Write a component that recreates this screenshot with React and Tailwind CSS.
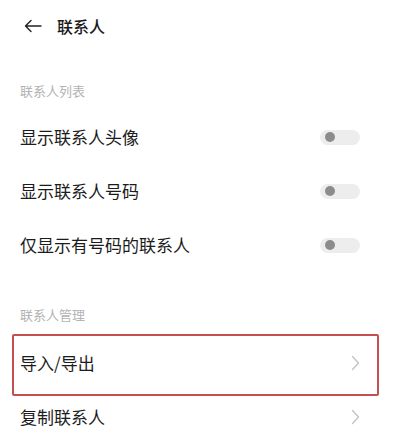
import React from "react";

function Toggle() {
  return (
    <div className="w-[40px] h-[15px] rounded-full bg-[#ededed] flex items-center pl-[5px]">
      <div className="w-[10px] h-[10px] rounded-full bg-[#8c8c8c]" />
    </div>
  );
}

function Chevron() {
  return (
    <svg width="9" height="16" viewBox="0 0 9 16" fill="none">
      <path d="M1.5 1.5 L7.5 8 L1.5 14.5" stroke="#c4c4c4" strokeWidth="1.4" strokeLinecap="round" strokeLinejoin="round" />
    </svg>
  );
}

function Row({ label, children, highlight }) {
  return (
    <div className="relative h-[54px] flex items-center justify-between pl-5 pr-[40px]">
      <span className="text-[17px] text-[#1c1c1c]">{label}</span>
      {children}
      {highlight && (
        <div className="absolute left-[12px] right-[21px] top-[-2px] bottom-[-6px] border-2 border-[#c4514f] rounded-[2px]" />
      )}
    </div>
  );
}

function SectionLabel({ text }) {
  return <div className="h-[18px] leading-[18px] pl-5 text-[13px] text-[#b3b3b3]">{text}</div>;
}

export default function App() {
  return (
    <div className="w-[400px] h-[440px] bg-white overflow-hidden font-['Noto_Sans_CJK_SC',sans-serif]">
      <div className="h-[52px] flex items-center pl-[24px] gap-[15px]">
        <svg width="18" height="14" viewBox="0 0 18 14" fill="none">
          <path d="M17 7 H1.5 M7 1.5 L1.5 7 L7 12.5" stroke="#222" strokeWidth="1.4" strokeLinecap="round" strokeLinejoin="round" />
        </svg>
        <span className="text-[16px] font-medium text-[#1a1a1a]">联系人</span>
      </div>
      <div className="mt-[30px]">
        <SectionLabel text="联系人列表" />
      </div>
      <div className="mt-[10px]">
        <Row label="显示联系人头像"><Toggle /></Row>
        <Row label="显示联系人号码"><Toggle /></Row>
        <Row label="仅显示有号码的联系人"><Toggle /></Row>
      </div>
      <div className="mt-[34px]">
        <SectionLabel text="联系人管理" />
      </div>
      <div className="mt-[12px]">
        <Row label="导入/导出" highlight>
          <Chevron />
        </Row>
        <Row label="复制联系人">
          <Chevron />
        </Row>
      </div>
    </div>
  );
}
